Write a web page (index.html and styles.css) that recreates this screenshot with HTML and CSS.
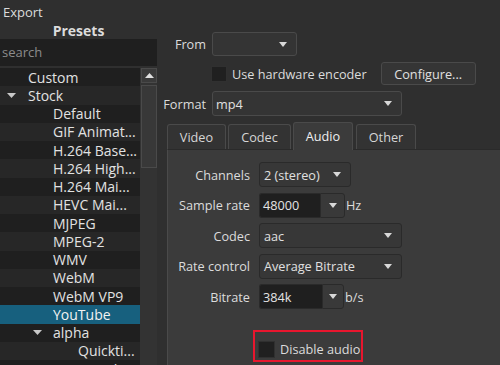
FILE: index.html
```html
<!DOCTYPE html>
<html>
<head>
<meta charset="utf-8">
<link rel="stylesheet" href="styles.css">
</head>
<body>
<div class="app">
  <aside class="presets">
    <div class="title">Export</div>
    <div class="heading">Presets</div>
    <div class="search">search</div>
    <div class="listwrap">
      <ul class="tree">
        <li class="row lv0">Custom</li>
        <li class="row lv0 parent"><svg class="twisty" width="9" height="5" viewBox="0 0 9 5"><path d="M0 0H9L4.5 5Z" fill="#c8c8c8"/></svg>Stock</li>
        <li class="row lv1">Default</li>
        <li class="row lv1">GIF Animat...</li>
        <li class="row lv1">H.264 Base...</li>
        <li class="row lv1">H.264 High...</li>
        <li class="row lv1">H.264 Mai...</li>
        <li class="row lv1">HEVC Mai...</li>
        <li class="row lv1">MJPEG</li>
        <li class="row lv1">MPEG-2</li>
        <li class="row lv1">WMV</li>
        <li class="row lv1">WebM</li>
        <li class="row lv1">WebM VP9</li>
        <li class="row lv1 sel">YouTube</li>
        <li class="row lv1 parent"><svg class="twisty" width="9" height="5" viewBox="0 0 9 5"><path d="M0 0H9L4.5 5Z" fill="#c8c8c8"/></svg>alpha</li>
        <li class="row lv2">Quickti...</li>
        <li class="row lv2">Ut Video</li>
      </ul>
      <div class="scrollbar">
        <div class="sb-up"><svg width="9" height="5" viewBox="0 0 9 5"><path d="M0 5H9L4.5 0Z" fill="#e0e0e0"/></svg></div>
        <div class="sb-handle"></div>
      </div>
    </div>
  </aside>

  <main class="settings">
    <div class="frow">
      <span class="flabel">From</span>
      <div class="combo combo-from"><span></span><svg width="8" height="5" viewBox="0 0 8 5"><path d="M0 0H8L4 5Z" fill="#d8d8d8"/></svg></div>
    </div>
    <div class="frow hw">
      <span class="flabel"></span>
      <span class="check"></span>
      <span class="checktext">Use hardware encoder</span>
      <button class="btn">Configure...</button>
    </div>
    <div class="frow fmt">
      <span class="flabel">Format</span>
      <div class="combo combo-format"><span>mp4</span><svg width="8" height="5" viewBox="0 0 8 5"><path d="M0 0H8L4 5Z" fill="#d8d8d8"/></svg></div>
    </div>

    <div class="tabwidget">
      <div class="tabbar">
        <div class="tab t-video">Video</div>
        <div class="tab t-codec">Codec</div>
        <div class="tab t-audio active">Audio</div>
        <div class="tab t-other">Other</div>
      </div>
      <div class="panel">
        <div class="grid">
          <span class="plabel">Channels</span>
          <div class="combo pcombo combo-ch"><span>2 (stereo)</span><svg width="8" height="5" viewBox="0 0 8 5"><path d="M0 0H8L4 5Z" fill="#d8d8d8"/></svg></div>

          <span class="plabel">Sample rate</span>
          <div class="withunit">
            <div class="spin spin-rate"><span class="spin-text">48000</span><span class="spin-btn"><svg width="8" height="5" viewBox="0 0 8 5"><path d="M0 0H8L4 5Z" fill="#d8d8d8"/></svg></span></div>
            <span class="unit">Hz</span>
          </div>

          <span class="plabel">Codec</span>
          <div class="combo pcombo combo-wide"><span>aac</span><svg width="8" height="5" viewBox="0 0 8 5"><path d="M0 0H8L4 5Z" fill="#d8d8d8"/></svg></div>

          <span class="plabel">Rate control</span>
          <div class="combo pcombo combo-wide"><span>Average Bitrate</span><svg width="8" height="5" viewBox="0 0 8 5"><path d="M0 0H8L4 5Z" fill="#d8d8d8"/></svg></div>

          <span class="plabel">Bitrate</span>
          <div class="withunit">
            <div class="spin spin-bit"><span class="spin-text">384k</span><span class="spin-btn"><svg width="8" height="5" viewBox="0 0 8 5"><path d="M0 0H8L4 5Z" fill="#d8d8d8"/></svg></span></div>
            <span class="unit">b/s</span>
          </div>
        </div>
        <div class="disable-row">
          <div class="highlight">
            <span class="check"></span>
            <span class="checktext">Disable audio</span>
          </div>
        </div>
      </div>
    </div>
  </main>
</div>
</body>
</html>
```

FILE: styles.css
```css
* { box-sizing: border-box; }
html, body { margin: 0; padding: 0; }
body {
  width: 500px;
  height: 365px;
  overflow: hidden;
  background: #2f2f2f;
  color: #dcdcdc;
  font-family: "Open Sans", "Noto Sans", sans-serif;
  font-size: 13px;
}
.app { display: flex; height: 365px; overflow: hidden; }

/* left: presets */
.presets { width: 157px; flex: none; display: flex; flex-direction: column; }
.title { height: 22px; padding: 2px 0 0 3px; line-height: 20px; font-size: 13px; }
.heading { height: 17px; line-height: 17px; font-size: 14px; font-weight: bold; text-align: center; }
.search {
  height: 27px; line-height: 27px; padding-left: 2px;
  background: #1f1f1f; color: #8c8c8c; font-size: 13px;
}
.listwrap { margin-top: 2px; display: flex; flex: 1; min-height: 0; }
.tree { list-style: none; margin: 0; padding: 0; width: 140px; flex: none; }
.row {
  height: 18.25px; font-size: 14px; white-space: nowrap;
  display: flex; align-items: center;
  background: #1f1f1f; color: #e2e2e2;
}
.row:nth-child(even) { background: #272727; }
.row.sel { background: #17607e; color: #f2f2f2; }
.lv0 { padding-left: 28px; }
.lv1 { padding-left: 53px; }
.lv2 { padding-left: 78px; }
.lv0.parent { padding-left: 7px; }
.lv1.parent { padding-left: 33px; }
.twisty { margin-right: 12px; flex: none; }
.lv1.parent .twisty { margin-right: 11px; }

.scrollbar { width: 17px; flex: none; background: #333333; padding: 0 0 0 1px; }
.sb-up {
  height: 15px; border: 1px solid #4a4a4a; background: #3a3a3a;
  display: flex; align-items: center; justify-content: center;
}
.sb-handle { margin-top: 2px; height: 83px; border: 1px solid #4a4a4a; background: #383838; }

/* right side */
.settings { flex: 1; padding-top: 32px; display: flex; flex-direction: column; min-width: 0; font-size: 12.7px; }
.frow { display: flex; align-items: center; }
.flabel { width: 49px; margin-right: 6px; text-align: right; flex: none; }
.hw { margin-top: 6px; height: 23px; }
.fmt { margin-top: 6px; }

.combo {
  display: flex; align-items: center; justify-content: space-between;
  height: 24px; padding: 0 9px 0 4px;
  background: #343434; border: 1px solid #4a4a4a; border-radius: 3px;
  color: #e0e0e0;
}
.combo-from { width: 85px; }
.combo-format { width: 190px; height: 25px; padding-left: 3px; }

.check {
  width: 17px; height: 17px; flex: none;
  background: #202020; border: 1px solid #303030;
}
.hw .check { width: 16px; height: 16px; margin-left: -1px; }
.checktext { margin-left: 5px; white-space: nowrap; }
.btn {
  margin-left: 14px; width: 95px; height: 23px;
  font: inherit; color: #e0e0e0;
  background: #353535; border: 1px solid #4a4a4a; border-radius: 3px;
  padding: 0;
}

.tabwidget { margin-top: 6px; margin-left: 10px; flex: 1; display: flex; flex-direction: column; }
.tabbar { display: flex; align-items: flex-end; height: 27px; }
.tab {
  height: 25px; display: flex; align-items: center; justify-content: center;
  background: #333333; border: 1px solid #4a4a4a; border-bottom: none;
  border-radius: 3px 3px 0 0; color: #d6d6d6;
}
.t-video { width: 59px; margin-right: 2px; }
.t-codec { width: 63px; margin-right: 2px; }
.t-audio { width: 60px; margin-right: 3px; }
.t-other { width: 60px; }
.tab.active {
  height: 28px; margin-bottom: -1px; position: relative; z-index: 1;
  background: #3b3b3b; color: #f0f0f0; padding-bottom: 2px;
}

.panel {
  flex: 1; background: #3b3b3b;
  border-top: 1px solid #2a2a2a; border-left: 1px solid #4a4a4a;
  padding-top: 12px; display: flex; flex-direction: column;
}
.grid {
  display: grid; grid-template-columns: 82px auto; column-gap: 9px;
  row-gap: 5.5px; grid-auto-rows: 25px; align-items: center;
  justify-items: start;
}
.plabel { justify-self: end; white-space: nowrap; }
.pcombo { height: 25px; background: #373737; border-color: #2a2a2a; }
.combo-ch { width: 92px; }
.combo-wide { width: 143px; }

.withunit { display: flex; align-items: center; height: 25px; }
.spin { display: flex; height: 25px; }
.spin-text {
  display: flex; align-items: center; padding-left: 3px;
  background: #1f1f1f; border: 1px solid #2a2a2a; border-right: none;
  border-radius: 3px 0 0 3px; color: #e4e4e4;
}
.spin-btn {
  display: flex; align-items: center; justify-content: center;
  background: #393939; border: 1px solid #2a2a2a; border-radius: 0 3px 3px 0;
}
.spin-rate .spin-text { width: 61px; }
.spin-rate .spin-btn { width: 25px; }
.spin-bit .spin-text { width: 63px; }
.spin-bit .spin-btn { width: 22px; }
.unit { margin-left: 1px; }

.disable-row { margin-top: 21px; padding-left: 85px; display: flex; }
.highlight {
  width: 110px; height: 32px; border: 2px solid #e8162e;
  display: flex; align-items: center; padding: 6px 0 0 3px;
}
.highlight .checktext { margin-left: 5px; }
```
